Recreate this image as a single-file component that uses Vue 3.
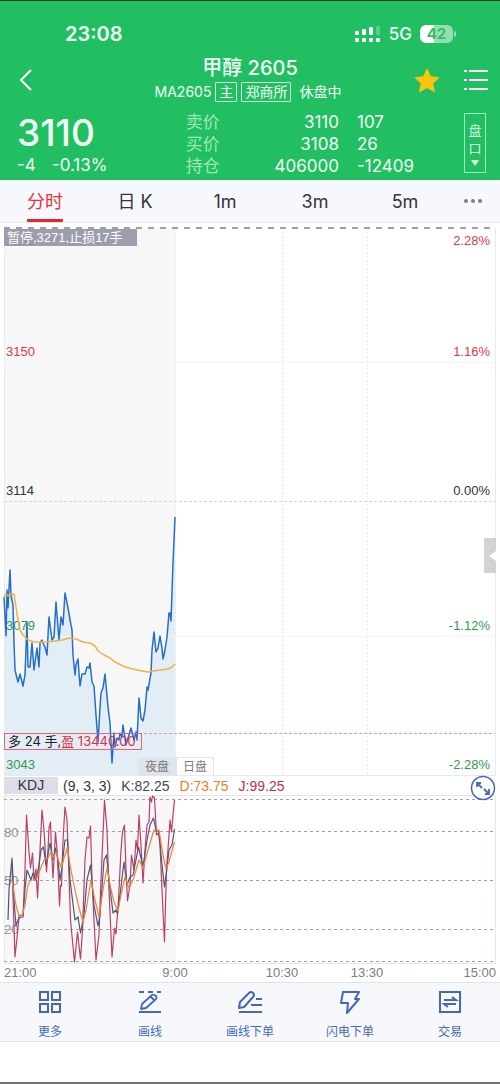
<script setup>
import { ref } from 'vue';

const tabs = ['分时', '日 K', '1m', '3m', '5m'];
const activeTab = ref('分时');

const quotes = [
  { label: '卖价', value: '3110', extra: '107' },
  { label: '买价', value: '3108', extra: '26' },
  { label: '持仓', value: '406000', extra: '-12409' },
];

const priceLabels = [
  { y: 245, left: '3185', right: '2.28%', tone: 'up' },
  { y: 356, left: '3150', right: '1.16%', tone: 'up' },
  { y: 495, left: '3114', right: '0.00%', tone: 'flat' },
  { y: 630, left: '3079', right: '-1.12%', tone: 'down' },
  { y: 769, left: '3043', right: '-2.28%', tone: 'down' },
];

const kdjLevels = [
  { y: 832, label: '80' },
  { y: 880, label: '50' },
  { y: 929, label: '20' },
];

const price = '4,597 6,636 7,590 8,608 10,570 11,595 13,605 14,643 15,670 18,682 20,674 23,686 25,675 27,622 28,667 30,667 32,643 34,670 36,655 37,648 39,667 40,643 42,640 43,643 45,647 47,655 49,617 52,640 54,637 56,602 59,640 61,617 63,625 65,593 67,603 68,608 71,625 72,630 73,655 75,675 76,665 78,659 80,686 82,674 85,674 87,667 89,668 90,663 92,682 94,686 96,715 98,742 100,708 101,693 103,688 105,674 108,707 110,723 112,763 114,733 115,747 117,738 119,740 120,733 122,737 123,725 126,745 128,738 131,728 134,740 136,732 137,740 139,698 141,718 143,721 145,710 147,687 148,690 151,673 152,650 154,632 156,652 158,648 160,636 162,648 163,659 165,650 167,637 169,613 170,613 171,621 173,563 175,517';
const average = '4,597 6,594 8,596 10,594 14,594 16,607 18,620 20,630 23,635 28,640 35,642 45,642 55,641 62,640 70,638 76,639 83,642 90,643 95,646 98,651 104,655 110,658 115,662 125,667 137,670 148,672 160,670 168,669 172,667 175,664';

const lineJ = '12,867 15,957 19,918 23,917 25,870 26.5,815 29,852 30.5,868 32.5,853 34,880 36,869 37.5,898 39.5,860 42,810 44,830 46.5,872 48,850 49,828 50.5,822 51.5,850 53,878 55.5,832 57,850 58,870 59.5,906 60.5,885 61.5,886 63,840 65,807 67,820 68.5,862 70.5,920 74.5,962 77.5,932 80.5,959 82.5,930 85,860 87,837 89,838 90.5,826 92,880 96,960 99,935 101,880 104.5,800 107,830 109,890 112,957 114.5,928 116,934 118.5,900 121,850 122.5,832 124.5,825 126,870 127.5,901 130,885 131.5,855 134,870 136,840 137.5,850 139,815 141,845 143,883 145,850 147,825 149,822 150,797 151.5,802 152.5,796 154.5,798 156.5,835 158.5,833 160,845 162,890 164.5,942 166.5,870 169,835 170,820 171.5,832 173,815 174.5,800';
const lineK = '8,920 9,890 12,858 14,900 16,926 18,920 20,915 23,916 25,890 27,870 31,880 33,873 36,880 39,865 41,850 43.5,847 46,865 50,843 53,860 55.5,848 58,860 60,880 61.5,870 65,840 67.5,840 70,880 75,920 78,917 80.5,933 84,915 87,880 90.5,865 94,905 98,926 100,915 104,860 106.5,855 109,880 113,913 116,910 117.5,914 120,895 124,862 127,885 130,877 133,875 138.5,847 143,867 147,840 150,825 153.5,818 156,830 159,832 162,865 164.5,887 167,868 169,850 172,845 174.5,829';
const lineD = '12,880 16,905 19,916 22,916 25,905 28,885 31,880 36,880 40,870 44,860 48,858 51,852 53,858 56,852 59,862 61.5,868 64,858 67.5,847 70,865 75,890 79,908 83,922 86,910 91,880 95,900 99,917 103,890 107,868 110,885 114,902 118,911 121,895 125,877 129,888 133,880 139,860 143,868 148,850 154,830 159,830 163,855 166,869 169,862 174.5,842';

const tools = ['更多', '画线', '画线下单', '闪电下单', '交易'];
</script>

<template>
  <div class="page">
    <header class="head">
      <div class="status">
        <span class="clock">23:08</span>
        <span class="signals">
          <svg width="26" height="16" viewBox="0 0 26 16" fill="#fff">
            <rect x="0" y="5" width="4" height="4" rx="1" />
            <rect x="7" y="3" width="4" height="6" rx="1" />
            <rect x="14" y="1" width="4" height="8" rx="1" />
            <rect x="21" y="0" width="4" height="9" rx="1" opacity="0.25" />
            <rect x="0" y="12" width="4" height="4" rx="1" />
            <rect x="7" y="12" width="4" height="4" rx="1" />
            <rect x="14" y="12" width="4" height="4" rx="1" />
            <rect x="21" y="12" width="4" height="4" rx="1" />
          </svg>
          <span class="net">5G</span>
          <span class="battery-wrap"><span class="battery">42</span><i class="cap"></i></span>
        </span>
      </div>

      <div class="title-bar">
        <button class="icon-btn back" aria-label="返回">
          <svg width="14" height="22" viewBox="0 0 14 22" fill="none" stroke="#fff" stroke-width="2">
            <path d="M12 1 2 11l10 10" />
          </svg>
        </button>
        <div class="names">
          <h1>甲醇 2605</h1>
          <p>MA2605 <span class="tag">主</span><span class="tag">郑商所</span><span class="state">休盘中</span></p>
        </div>
        <div class="actions">
          <button class="icon-btn" aria-label="自选">
            <svg width="26" height="25" viewBox="0 0 26 25" fill="#fcc40e" stroke="#fcc40e" stroke-width="1" stroke-linejoin="round">
              <path d="M13 1l3.5 7.7 8.4 1-6.2 5.7 1.7 8.3L13 19.6l-7.4 4.1 1.7-8.3L1.1 9.7l8.4-1z" />
            </svg>
          </button>
          <button class="icon-btn" aria-label="菜单">
            <svg width="24" height="22" viewBox="0 0 24 22" stroke="#fff" stroke-width="2" fill="none">
              <path d="M0 2h3M5 2h19M0 11h3M5 11h19M0 20h3M5 20h19" />
            </svg>
          </button>
        </div>
      </div>

      <div class="quote">
        <div class="last">
          <strong>3110</strong>
          <p><span>-4</span><span>-0.13%</span></p>
        </div>
        <dl class="levels">
          <div v-for="q in quotes" :key="q.label" class="level">
            <dt>{{ q.label }}</dt>
            <dd class="num">{{ q.value }}</dd>
            <dd>{{ q.extra }}</dd>
          </div>
        </dl>
        <button class="depth">
          <span>盘</span>
          <span>口</span>
          <svg width="8" height="6" viewBox="0 0 8 6" fill="#d5f5e1"><path d="M0 0h8L4 6z" /></svg>
        </button>
      </div>
    </header>

    <nav class="tabs">
      <button
        v-for="t in tabs"
        :key="t"
        class="tab"
        :class="{ active: t === activeTab }"
        @click="activeTab = t"
      ><span>{{ t }}</span></button>
      <button class="tab more" aria-label="更多周期">
        <svg width="20" height="4" viewBox="0 0 20 4" fill="#7c7f88">
          <circle cx="3" cy="2" r="2" /><circle cx="10" cy="2" r="2" /><circle cx="17" cy="2" r="2" />
        </svg>
      </button>
    </nav>

    <section class="chart">
      <svg class="plot" viewBox="0 224 500 552">
        <rect x="4" y="228" width="172" height="548" fill="#f7f7f8" />
        <polygon :points="`4,776 ${price} 175,776`" fill="#e3edf6" />
        <g fill="none" stroke="#e9eaec">
          <path d="M4.5 228v548M495.5 228v548M4 775.5h491" />
          <path d="M175.5 228v548M282.5 228v548M367.5 228v548" stroke-dasharray="2 2" />
          <path d="M4 362.5h491M4 636.5h491" stroke="#f4f4f6" />
          <path d="M4 501.5h491" stroke="#d4d5d8" stroke-dasharray="3 2" />
        </g>
        <path d="M4 228h491" stroke="#9fa0a4" stroke-width="2" stroke-dasharray="6 6" />
        <path d="M4 733.5h491" stroke="#e29a9d" stroke-dasharray="3 2" />
        <g v-for="l in priceLabels" :key="l.y" :class="l.tone">
          <text x="6" :y="l.y">{{ l.left }}</text>
          <text x="490" :y="l.y" text-anchor="end">{{ l.right }}</text>
        </g>
        <polyline :points="price" class="line" stroke="#2470c8" stroke-width="1.5" />
        <polyline :points="average" class="line" stroke="#efb248" stroke-width="1.5" />
      </svg>
      <div class="stop-order">暂停,3271,止损17手</div>
      <div class="position">多 24 手,<span>盈 13440.00</span></div>
      <div class="sessions"><span class="night">夜盘</span><span>日盘</span></div>
      <button class="drawer" aria-label="展开">
        <svg width="7" height="10" viewBox="0 0 7 10" fill="#fff"><path d="M7 0v10L0 5z" /></svg>
      </button>
    </section>

    <section class="kdj">
      <div class="kdj-head">
        <button class="kdj-name">KDJ</button>
        <span class="params">(9, 3, 3)</span>
        <span class="k">K:82.25</span>
        <span class="d">D:73.75</span>
        <span class="j">J:99.25</span>
        <button class="expand" aria-label="全屏">
          <svg width="26" height="26" viewBox="0 0 26 26" fill="none" stroke="#4569bd" stroke-width="2">
            <circle cx="13" cy="13" r="11.5" fill="#fff" stroke-width="1.5" />
            <path d="M7 12V8h4M7 8l5 5M14 14l5 5M19 14v5h-4" stroke-width="1.8" />
          </svg>
        </button>
      </div>
      <svg class="plot" viewBox="0 795 500 169">
        <rect x="4" y="796" width="172" height="168" fill="#f7f7f8" />
        <path d="M4.5 796v168M495.5 796v168M4 795.5h491M4 963.5h491" fill="none" stroke="#e3e6ea" />
        <text v-for="l in kdjLevels" :key="l.y" class="level-text" x="4" :y="l.y + 5">{{ l.label }}</text>
        <path d="M4 799.5h491M4 831.5h491M4 880.5h491M4 929.5h491M4 961.5h491" fill="none" stroke="#a2a3a7" stroke-dasharray="3 3" />
        <polyline :points="lineJ" class="line" stroke="#bd3f68" stroke-width="1.2" />
        <polyline :points="lineK" class="line" stroke="#4e5677" stroke-width="1.2" />
        <polyline :points="lineD" class="line" stroke="#ee843a" stroke-width="1.2" />
      </svg>
      <svg class="plot times" viewBox="0 0 500 18">
        <text x="4" y="13">21:00</text>
        <text x="175" y="13" text-anchor="middle">9:00</text>
        <text x="282" y="13" text-anchor="middle">10:30</text>
        <text x="367" y="13" text-anchor="middle">13:30</text>
        <text x="496" y="13" text-anchor="end">15:00</text>
      </svg>
    </section>

    <footer class="toolbar">
      <button v-for="(name, i) in tools" :key="name" class="tool">
        <svg width="24" height="24" viewBox="0 0 24 24" fill="none" stroke="#4566ba" stroke-width="2">
          <path v-if="i === 0" d="M2 2h8v8H2zM14 2h8v8h-8zM2 14h8v8H2zM14 14h8v8h-8z" />
          <template v-else-if="i === 1">
            <path d="M1 2h5M10 2h5M19 2h4M1 22h22" />
            <path d="M3 19l1-5L14 5q2-1 4 1 1 2 0 3L8 18zM13 7l3 3" stroke-linejoin="round" stroke-width="1.8" />
          </template>
          <template v-else-if="i === 2">
            <path d="M1 18l1-6L11 3q2-2 4 0 2 2 0 4L6 17zM18 9h6M13 15h11M1 22h23" stroke-linejoin="round" />
          </template>
          <path v-else-if="i === 3" d="M5 2h16l-4 7h4L9 23l1-10H3z" stroke-linejoin="round" />
          <template v-else>
            <rect x="2" y="2" width="20" height="20" />
            <path d="M6 10h12l-4-3M18 14H6l4 3" />
          </template>
        </svg>
        <span>{{ name }}</span>
      </button>
    </footer>
    <div class="home-area"></div>
  </div>
</template>

<style>
body {
  background: #fff;
}
</style>

<style scoped>
.page {
  font-family: Inter, "Noto Sans CJK SC", sans-serif;
  color: #33353c;
}

button {
  border: 0;
  padding: 0;
  background: none;
  font: inherit;
  color: inherit;
}

svg {
  display: block;
}

p, h1, dl, dd {
  margin: 0;
}

/* header */
.head {
  background: #21bf61;
  color: #f2fff6;
  border-top: 1px solid #123d22;
  padding-top: 20px;
}

.status {
  display: flex;
  justify-content: space-between;
  align-items: center;
  height: 26px;
  padding: 0 44px 0 65px;
}

.clock {
  font-size: 20px;
  font-weight: 600;
}

.signals {
  display: flex;
  align-items: center;
  gap: 8px;
}

.net {
  font-size: 17px;
  font-weight: 500;
}

.battery-wrap {
  display: flex;
  align-items: center;
  gap: 1px;
}

.battery {
  width: 33px;
  height: 18px;
  border-radius: 6px;
  background: linear-gradient(90deg, #fff 42%, #93dfb2 42%);
  color: #35bd6c;
  font-size: 15px;
  font-weight: 700;
  line-height: 18px;
  text-align: center;
}

.cap {
  width: 2px;
  height: 6px;
  border-radius: 0 2px 2px 0;
  background: #93dfb2;
}

.title-bar {
  display: grid;
  grid-template-columns: 100px 1fr 100px;
  align-items: center;
  height: 62px;
}

.icon-btn {
  display: block;
}

.back {
  margin: 4px 0 0 19px;
}

.names {
  text-align: center;
  white-space: nowrap;
  padding: 2px 4px 0 0;
}

.names h1 {
  font-size: 20px;
  font-weight: 500;
  line-height: 26px;
  padding-left: 4px;
}

.names p {
  display: flex;
  justify-content: center;
  align-items: center;
  gap: 4px;
  font-size: 14px;
  line-height: 22px;
}

.tag {
  border: 1px solid #d5f5e1;
  border-radius: 1px;
  padding: 0 3px;
  line-height: 18px;
}

.state {
  margin-left: 4px;
}

.actions {
  display: flex;
  justify-content: flex-end;
  align-items: center;
  gap: 24px;
  padding: 4px 12px 0 0;
}

.quote {
  display: flex;
  padding: 2px 14px 4px 17px;
  height: 65px;
}

.last {
  flex: 34;
}

.last strong {
  display: block;
  font-size: 37px;
  font-weight: 500;
  line-height: 44px;
}

.last p {
  display: flex;
  gap: 16px;
  font-size: 17px;
  line-height: 21px;
}

.levels {
  flex: 56;
}

.level {
  display: grid;
  grid-template-columns: 36px 1fr 107px;
  column-gap: 18px;
  font-size: 17px;
  line-height: 22px;
}

.level dt {
  color: #9fe6b9;
}

.num {
  text-align: right;
}

.depth {
  box-sizing: border-box;
  width: 22px;
  height: 60px;
  margin-top: 2px;
  border: 1px solid #a5e7bd;
  display: flex;
  flex-direction: column;
  align-items: center;
  justify-content: center;
  color: #d5f5e1;
  font-size: 13px;
  line-height: 18px;
}

.depth svg {
  margin-top: 3px;
}

/* period tabs */
.tabs {
  display: flex;
  height: 42px;
  background: #f7f8fb;
  border-bottom: 1px solid #e6e7ea;
}

.tab {
  flex: 90;
  display: flex;
  justify-content: center;
  font-size: 18px;
}

.tab span {
  line-height: 44px;
  height: 39px;
}

.tab.active {
  color: #e93037;
}

.active span {
  border-bottom: 3px solid #e6242c;
  border-radius: 1px;
}

.tab.more {
  flex: 50;
  align-items: center;
}

.more svg {
  margin-right: 4px;
}

/* price chart */
.chart {
  position: relative;
  padding-top: 1px;
}

.plot {
  width: 100%;
  height: auto;
}

.plot text {
  font-family: "Liberation Sans", sans-serif;
  font-size: 13px;
}

.line {
  fill: none;
  stroke-linejoin: round;
}

.up {
  fill: #dd3b46;
}

.flat {
  fill: #333;
}

.down {
  fill: #2f9b4c;
}

.stop-order {
  position: absolute;
  left: 4px;
  top: 6px;
  width: 133px;
  box-sizing: border-box;
  padding-left: 3px;
  background: rgba(143, 146, 163, 0.88);
  color: #fff;
  font-family: "Liberation Sans", "Noto Sans CJK SC", sans-serif;
  font-size: 13px;
  line-height: 17px;
  white-space: nowrap;
}

.position {
  position: absolute;
  left: 4px;
  bottom: 26px;
  box-sizing: border-box;
  width: 138px;
  border: 1px solid #ea6374;
  padding-left: 3px;
  font-size: 13px;
  line-height: 15px;
  white-space: nowrap;
  color: #222;
}

.position span {
  color: #dc3246;
}

.sessions {
  position: absolute;
  left: 138px;
  bottom: 0;
  display: flex;
  color: #77797d;
  font-size: 12px;
  line-height: 18px;
}

.sessions span {
  width: 36px;
  text-align: center;
  border: 1px solid #e4e5e8;
  border-bottom: 0;
}

.sessions .night {
  background: #dfe5ea;
}

.drawer {
  position: absolute;
  right: 4px;
  top: 57%;
  width: 12px;
  height: 35px;
  background: #d2d2d4;
  display: flex;
  align-items: center;
  justify-content: flex-end;
}

/* indicator */
.kdj-head {
  position: relative;
  display: flex;
  align-items: center;
  height: 19px;
  margin: 0 4px;
  font-family: "Liberation Sans", sans-serif;
  font-size: 14px;
  white-space: nowrap;
}

.kdj-name {
  width: 54px;
  height: 17px;
  background: #dddde8;
  line-height: 17px;
}

.params {
  margin-left: 5px;
}

.k, .d, .j {
  margin-left: 10px;
}

.k {
  color: #43475e;
}

.d {
  color: #ec7b1e;
}

.j {
  color: #c52c56;
}

.expand {
  position: absolute;
  right: 0;
  top: -1px;
}

.plot .level-text {
  fill: #929397;
}

.times {
  fill: #7d7e84;
}

/* bottom toolbar */
.toolbar {
  display: flex;
  background: #f7f8fb;
  border-top: 1px solid #e2e3e7;
  border-bottom: 1px solid #e2e3e7;
}

.tool {
  flex: 1;
  display: flex;
  flex-direction: column;
  align-items: center;
  gap: 9px;
  padding: 7px 0 0;
  color: #4569bd;
  font-size: 12px;
  line-height: 18px;
}

.home-area {
  height: 40px;
  border-bottom: 2px solid #707070;
}
</style>
